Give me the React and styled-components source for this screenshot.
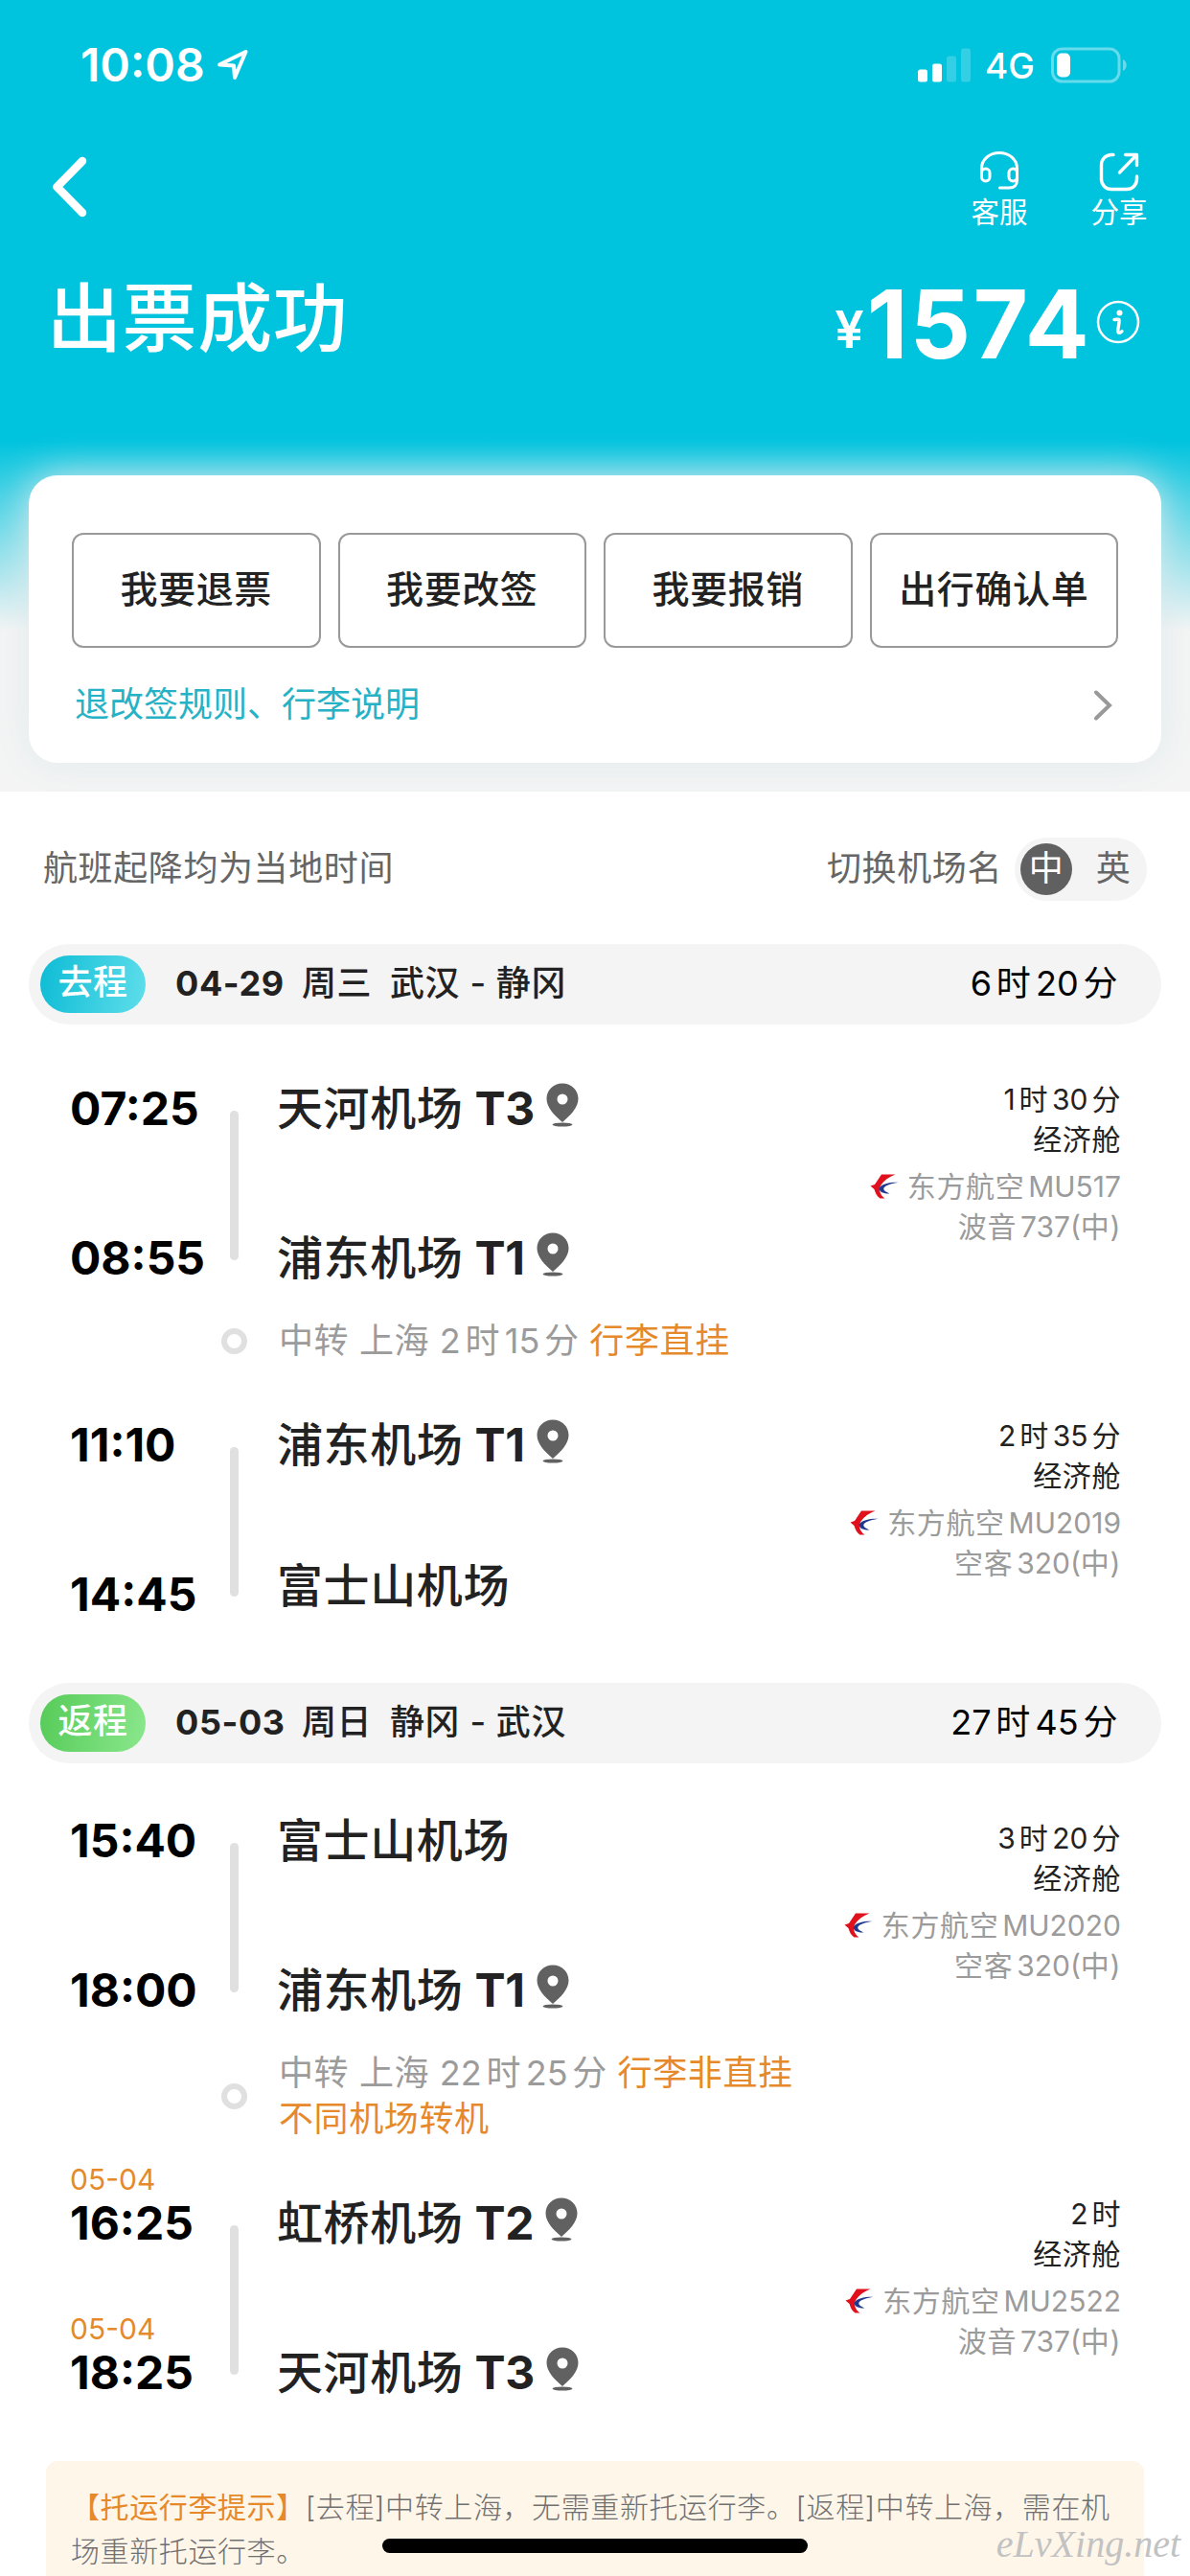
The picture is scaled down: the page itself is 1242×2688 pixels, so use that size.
import React from 'react'
import styled, { createGlobalStyle } from 'styled-components'

const cyan = '#00c3de'
const ink = '#222222'
const darkGrey = '#666666'
const midGrey = '#9b9b9b'
const lightGrey = '#e0e0e0'
const panelGrey = '#f4f4f4'
const orange = '#e6892a'

const GlobalStyle = createGlobalStyle`
    * {
        box-sizing: border-box;
    }

    body {
        margin: 0;
        background: #ffffff;
        font-family: Inter, 'Noto Sans CJK SC', sans-serif;
        line-height: 1.2;
        color: ${ink};
    }
`

const Icon = styled.svg`
    display: block;
    flex-shrink: 0;
    margin-top: ${({ $shift }) => $shift || 0}px;
`

const Screen = styled.div`
    position: relative;
    width: 1242px;
    height: 2688px;
    overflow: hidden;
    white-space: nowrap;
`

const Hero = styled.header`
    height: 826px;
    overflow: hidden;
    color: #ffffff;
    background: linear-gradient(${cyan} 0, ${cyan} 460px, ${panelGrey} 658px);
`

const StatusBar = styled.div`
    height: 136px;
    padding: 0 65px 0 84px;
    display: flex;
    align-items: center;
    justify-content: space-between;
`

const StatusGroup = styled.div`
    display: flex;
    align-items: center;
`

const Clock = styled.span`
    margin-right: 12px;
    font-size: 48px;
    font-weight: 600;
    line-height: 48px;
`

const Network = styled.span`
    margin: 2px 17px 0 14px;
    font-size: 37px;
    font-weight: 500;
    line-height: 40px;
`

const Nav = styled.nav`
    height: 112px;
    padding: 22px 44px 0 53px;
    display: flex;
    justify-content: space-between;
    align-items: flex-start;
`

const NavActions = styled.div`
    display: flex;
    gap: 65px;
`

const NavAction = styled.div`
    width: 60px;
    display: flex;
    flex-direction: column;
    align-items: center;
    font-size: 29.5px;
    line-height: 42px;
`

const TitleRow = styled.div`
    height: 166px;
    padding: 0 52px 0 49px;
    display: flex;
    align-items: center;
    justify-content: space-between;
`

const Title = styled.h1`
    margin: 3px 0 0;
    font-size: 78px;
    font-weight: 500;
    line-height: 80px;
    letter-spacing: 0.6px;
`

const Price = styled.div`
    display: flex;
    align-items: center;
    padding-top: 14px;
`

const Currency = styled.span`
    margin: 12px 3px 0 0;
    font-size: 54px;
    font-weight: 600;
    line-height: 60px;
`

const Amount = styled.span`
    margin-right: 5px;
    font-size: 99px;
    font-weight: 700;
    line-height: 100px;
    letter-spacing: 2.4px;
`

const Card = styled.section`
    height: 300px;
    margin: 82px 30px 0;
    padding: 60px 45px 0;
    border-radius: 30px;
    background: #ffffff;
    box-shadow: 0 0 40px #dfeaed;
`

const ActionGrid = styled.div`
    display: grid;
    grid-template-columns: repeat(4, 1fr);
    gap: 18px;
`

const ActionButton = styled.button`
    height: 120px;
    padding: 0 0 2px;
    border: 2px solid #999999;
    border-radius: 12px;
    background: #ffffff;
    color: ${ink};
    font-family: inherit;
    font-size: 39px;
    font-weight: 500;
    line-height: 48px;
    letter-spacing: 0.6px;
`

const RuleLink = styled.div`
    height: 120px;
    padding: 0 6px 0 3px;
    display: flex;
    align-items: center;
    justify-content: space-between;
    color: #26b2c6;
    font-size: 36px;
`

const Toolbar = styled.div`
    padding: 48px 45px 45px;
    display: flex;
    align-items: center;
    justify-content: space-between;
    color: ${darkGrey};
    font-size: 36px;
    letter-spacing: 0.6px;
`

const Switcher = styled.div`
    display: flex;
    align-items: center;
`

const Pill = styled.div`
    width: 138px;
    height: 66px;
    margin-left: 13px;
    padding: 0 8px 0 6px;
    display: flex;
    align-items: center;
    justify-content: space-between;
    border-radius: 33px;
    background: ${panelGrey};
`

const PillOption = styled.span`
    width: 54px;
    height: 54px;
    border-radius: 50%;
    line-height: 52px;
    text-align: center;
    color: ${({ $active }) => ($active ? '#ffffff' : darkGrey)};
    background: ${({ $active }) => ($active ? '#606060' : 'transparent')};
`

const TripBar = styled.div`
    height: 84px;
    margin: 0 30px;
    padding: 0 45px 0 12px;
    display: flex;
    align-items: center;
    border-radius: 42px;
    background: ${panelGrey};
    font-size: 36px;
    letter-spacing: 0.6px;
`

const TripTag = styled.span`
    width: 110px;
    height: 60px;
    margin-right: 31px;
    border-radius: 30px;
    color: #ffffff;
    font-weight: 500;
    line-height: 56px;
    text-align: center;
    background: ${({ $back }) => ($back
        ? 'linear-gradient(100deg, #56cb58, #8ae78c)'
        : 'linear-gradient(100deg, #0dbcd5, #5fdeeb)')};
`

const TripDate = styled.span`
    width: 132px;
    font-weight: 700;
    letter-spacing: 0.6px;
`

const TripWeekday = styled.span`
    width: 92px;
    font-weight: 500;
`

const TripRoute = styled.span`
    flex: 1;
    font-weight: 500;
`

const TripTotal = styled.span`
    color: #000000;
`

const Legs = styled.div`
    padding: 57px 0 68px;
`

const LegRow = styled.div`
    height: ${({ $pinned }) => ($pinned ? 211 : 204)}px;
    padding: 0 72px 0 73px;
    display: flex;
`

const Stops = styled.div`
    padding-top: ${({ $pinned }) => ($pinned ? 7 : 0)}px;
    display: flex;
    flex: 1;
`

const StopColumn = styled.div`
    width: ${({ $width }) => $width || 'auto'};
    display: flex;
    flex-direction: column;
    gap: 108px;
`

const StopTime = styled.div`
    height: 48px;
    display: flex;
    flex-direction: column;
    justify-content: flex-end;
    color: #000000;
    font-size: 48px;
    font-weight: 700;
    line-height: 48px;
`

const NextDay = styled.span`
    color: ${orange};
    font-size: 30px;
    font-weight: 400;
    line-height: 44px;
`

const Track = styled.div`
    width: 9px;
    height: 156px;
    margin: 26px 40px 0 9px;
    border-radius: 5px;
    background: ${lightGrey};
`

const Airport = styled.div`
    height: 48px;
    margin-top: ${({ $raised }) => ($raised ? '-9px' : '0')};
    margin-bottom: ${({ $raised }) => ($raised ? '9px' : '0')};
    display: flex;
    align-items: center;
    gap: 12px;
    font-size: 48px;
    font-weight: 500;
    line-height: 48px;
    letter-spacing: 0.6px;

    b {
        margin-left: 1px;
        font-weight: 700;
        letter-spacing: -0.3px;
    }
`

const Detail = styled.div`
    display: flex;
    flex-direction: column;
    align-items: flex-end;
    color: ${({ $muted }) => ($muted ? midGrey : ink)};
    font-size: 30px;
    line-height: 42px;
    letter-spacing: 0.6px;

    & + & {
        margin-top: 7px;
    }
`

const Airline = styled.div`
    display: flex;
    align-items: center;
    gap: 9px;
`

const TransferRow = styled.div`
    padding: 38px 0 54px 231px;
    display: flex;
    align-items: center;
    color: ${midGrey};
    font-size: 36px;
    line-height: 48px;
    letter-spacing: 0.6px;
`

const Ring = styled.i`
    width: 27px;
    height: 27px;
    margin-right: 33px;
    border: 6px solid ${lightGrey};
    border-radius: 50%;
`

const Warning = styled.span`
    color: ${orange};
`

// keeps a thin gap between digits and the characters beside them
const Latin = styled.span`
    margin: 0 ${({ $last }) => ($last ? '0' : '0.13em')} 0 ${({ $first }) => ($first ? '0' : '0.13em')};
    letter-spacing: 0;
`

const Notice = styled.section`
    height: 140px;
    margin: 0 48px;
    padding: 25px 26px 0;
    border-radius: 12px;
    background: #fff6ea;
    color: #707070;
    font-size: 30px;
    font-weight: 300;
    line-height: 46px;
    letter-spacing: 0.6px;

    strong {
        color: ${orange};
        font-weight: 400;
    }
`

const HomeIndicator = styled.div`
    position: absolute;
    left: 399px;
    bottom: 24px;
    width: 444px;
    height: 15px;
    border-radius: 8px;
    background: #000000;
`

const Watermark = styled.span`
    position: absolute;
    right: 10px;
    bottom: 9px;
    color: #c2c2c2;
    font-family: 'Liberation Serif', serif;
    font-size: 40px;
    font-style: italic;
    line-height: 48px;
`

const LocationIcon = () => (
    <Icon $shift={-2} width="34" height="34" viewBox="0 0 34 34" fill="none" stroke="#fff" strokeWidth="4" strokeLinejoin="round">
        <path d="M3 17.500L30.500 4L19 31L18 18.500Z" />
    </Icon>
)

const SignalIcon = () => (
    <Icon width="56" height="36" viewBox="0 0 56 36" fill="#fff">
        <rect x="0" y="22.500" width="10" height="13" rx="2.500" />
        <rect x="15" y="16.500" width="10" height="19" rx="2.500" />
        <rect x="30" y="8.500" width="10" height="27" rx="2.500" opacity="0.2" />
        <rect x="45" y="0.500" width="10" height="35" rx="2.500" opacity="0.2" />
    </Icon>
)

const BatteryIcon = () => (
    <Icon width="80" height="38" viewBox="0 0 80 38" fill="#fff">
        <rect x="1.500" y="2" width="69.500" height="34" rx="10" fill="none" stroke="#fff" strokeWidth="3" opacity="0.4" />
        <rect x="6" y="6.500" width="14" height="25" rx="5" />
        <path d="M75 13c5 2 5 10 0 12z" opacity="0.4" />
    </Icon>
)

const BackIcon = () => (
    <Icon $shift={4} width="40" height="66" viewBox="0 0 40 66" fill="none" stroke="#fff" strokeWidth="8.500" strokeLinecap="round" strokeLinejoin="round">
        <path d="M33 6L6.500 33L33 60" />
    </Icon>
)

const HeadsetIcon = () => (
    <Icon width="42" height="42" viewBox="0 0 42 42" fill="none" stroke="#fff" strokeWidth="3" strokeLinecap="round">
        <path d="M2.500 21v-3C2.500 8 11 1.500 21 1.500S39.500 8 39.500 18v12c0 5-3 8-8 8h-10" />
        <rect x="2.500" y="18" width="8.500" height="13" rx="4.250" />
        <rect x="31" y="18" width="8.500" height="13" rx="4.250" />
    </Icon>
)

const ShareIcon = () => (
    <Icon width="42" height="42" viewBox="0 0 42 42" fill="none" stroke="#fff" strokeWidth="3.400" strokeLinecap="round" strokeLinejoin="round">
        <path d="M15 3.500h-2A10.500 10.500 0 0 0 2.500 14v15a10.500 10.500 0 0 0 10.500 10.500h16a10.500 10.500 0 0 0 10.500-10.500v-3" />
        <path d="M27.500 3.500h12v11M38.500 4.500L21.500 22" />
    </Icon>
)

const InfoIcon = () => (
    <Icon $shift={-5} width="46" height="46" viewBox="0 0 46 46">
        <circle cx="23" cy="23" r="21" fill="none" stroke="#fff" strokeWidth="2.500" />
        <circle cx="24.500" cy="13.500" r="3" fill="#fff" />
        <path d="M19 20.500c2.500 0 4-1 5 0s-2 11.500-1 13 2.500.5 4-.8" fill="none" stroke="#fff" strokeWidth="3.400" strokeLinecap="round" />
    </Icon>
)

const ArrowIcon = () => (
    <Icon width="20" height="34" viewBox="0 0 20 34" fill="none" stroke="#999" strokeWidth="4" strokeLinecap="round">
        <path d="M3 3.500L17 17L3 30.500" />
    </Icon>
)

const PinIcon = () => (
    <Icon $shift={-8} width="34" height="46" viewBox="0 0 34 46" fill="#616161">
        <path fillRule="evenodd" d="M17 0.500C7.500 0.500 0.500 7.500 0.500 16.500C0.500 26 9 34 17 41C25 34 33.500 26 33.500 16.500C33.500 7.500 26.500 0.500 17 0.500ZM17 11.500a5.500 5.500 0 1 1 0 11a5.500 5.500 0 1 1 0-11Z" />
        <ellipse cx="17" cy="43.500" rx="10.500" ry="2" />
    </Icon>
)

const EasternLogo = () => (
    <Icon width="30" height="26" viewBox="0 0 30 26">
        <path d="M12 0.500H26.500C19.500 3 14.500 7 11.500 11.500C8.800 16 10 21.500 15.500 25.500H10.500C7 23 5.500 19.500 4.500 16L0.500 12.500L5 11Z" fill="#e0101c" />
        <path d="M29.500 8.800C21 8.500 12 10.500 9.800 14.500C9.200 18.500 13.500 20.800 20.500 20.500C16.500 18.500 13.500 17 14.500 14.500C16.500 11.500 23 10 29.500 8.800Z" fill="#20398f" />
    </Icon>
)

const Spaced = ({ text }) => {
    const runs = text.match(/[\x21-\x7e]+|[^\x21-\x7e]+/g)
    return runs.map((run, i) => (
        /^[0-9A-Z]/.test(run)
            ? <Latin key={i} $first={i === 0} $last={i === runs.length - 1 || run.endsWith('(')}>{run}</Latin>
            : run
    ))
}

const Place = ({ stop, raised }) => (
    <Airport $raised={raised && !stop.terminal}>
        <span>{stop.name}{stop.terminal && <b> {stop.terminal}</b>}</span>
        {stop.terminal && <PinIcon />}
    </Airport>
)

const Leg = ({ leg }) => {
    const pinned = Boolean(leg.from.terminal)
    return (
        <LegRow $pinned={pinned}>
            <Stops $pinned={pinned}>
                <StopColumn $width="158px">
                    {[leg.from, leg.to].map((stop) => (
                        <StopTime key={stop.time}>
                            {stop.day && <NextDay>{stop.day}</NextDay>}
                            {stop.time}
                        </StopTime>
                    ))}
                </StopColumn>
                <Track />
                <StopColumn>
                    <Place stop={leg.from} />
                    <Place stop={leg.to} raised />
                </StopColumn>
            </Stops>
            <div>
                <Detail>
                    <span><Spaced text={leg.duration} /></span>
                    <span>经济舱</span>
                </Detail>
                <Detail $muted>
                    <Airline>
                        <EasternLogo />
                        <span><Spaced text={`东方航空${leg.flight}`} /></span>
                    </Airline>
                    <span><Spaced text={leg.plane} /></span>
                </Detail>
            </div>
        </LegRow>
    )
}

const Transfer = ({ wait, warning, extra }) => (
    <TransferRow>
        <Ring />
        <div>
            中转 上海 <Spaced text={wait} /> <Warning>{warning}</Warning>
            {extra && <><br /><Warning>{extra}</Warning></>}
        </div>
    </TransferRow>
)

const trips = [
    {
        tag: '去程',
        date: '04-29',
        weekday: '周三',
        route: '武汉 - 静冈',
        total: '6时20分',
        legs: [
            {
                from: { time: '07:25', name: '天河机场', terminal: 'T3' },
                to: { time: '08:55', name: '浦东机场', terminal: 'T1' },
                duration: '1时30分',
                flight: 'MU517',
                plane: '波音737(中)'
            },
            {
                from: { time: '11:10', name: '浦东机场', terminal: 'T1' },
                to: { time: '14:45', name: '富士山机场' },
                duration: '2时35分',
                flight: 'MU2019',
                plane: '空客320(中)'
            }
        ],
        transfer: { wait: '2时15分', warning: '行李直挂' }
    },
    {
        tag: '返程',
        back: true,
        date: '05-03',
        weekday: '周日',
        route: '静冈 - 武汉',
        total: '27时45分',
        legs: [
            {
                from: { time: '15:40', name: '富士山机场' },
                to: { time: '18:00', name: '浦东机场', terminal: 'T1' },
                duration: '3时20分',
                flight: 'MU2020',
                plane: '空客320(中)'
            },
            {
                from: { time: '16:25', name: '虹桥机场', terminal: 'T2', day: '05-04' },
                to: { time: '18:25', name: '天河机场', terminal: 'T3', day: '05-04' },
                duration: '2时',
                flight: 'MU2522',
                plane: '波音737(中)'
            }
        ],
        transfer: { wait: '22时25分', warning: '行李非直挂', extra: '不同机场转机' }
    }
]

const Trip = ({ trip }) => (
    <section>
        <TripBar>
            <TripTag $back={trip.back}>{trip.tag}</TripTag>
            <TripDate>{trip.date}</TripDate>
            <TripWeekday>{trip.weekday}</TripWeekday>
            <TripRoute>{trip.route}</TripRoute>
            <TripTotal><Spaced text={trip.total} /></TripTotal>
        </TripBar>
        <Legs>
            <Leg leg={trip.legs[0]} />
            <Transfer {...trip.transfer} />
            <Leg leg={trip.legs[1]} />
        </Legs>
    </section>
)

export default function App() {
    return (
        <Screen>
            <GlobalStyle />
            <Hero>
                <StatusBar>
                    <StatusGroup>
                        <Clock>10:08</Clock>
                        <LocationIcon />
                    </StatusGroup>
                    <StatusGroup>
                        <SignalIcon />
                        <Network>4G</Network>
                        <BatteryIcon />
                    </StatusGroup>
                </StatusBar>
                <Nav>
                    <BackIcon />
                    <NavActions>
                        <NavAction><HeadsetIcon />客服</NavAction>
                        <NavAction><ShareIcon />分享</NavAction>
                    </NavActions>
                </Nav>
                <TitleRow>
                    <Title>出票成功</Title>
                    <Price>
                        <Currency>¥</Currency>
                        <Amount>1574</Amount>
                        <InfoIcon />
                    </Price>
                </TitleRow>
                <Card>
                    <ActionGrid>
                        {['我要退票', '我要改签', '我要报销', '出行确认单'].map((label) => (
                            <ActionButton key={label}>{label}</ActionButton>
                        ))}
                    </ActionGrid>
                    <RuleLink>
                        退改签规则、行李说明
                        <ArrowIcon />
                    </RuleLink>
                </Card>
            </Hero>
            <Toolbar>
                <span>航班起降均为当地时间</span>
                <Switcher>
                    切换机场名
                    <Pill>
                        <PillOption $active>中</PillOption>
                        <PillOption>英</PillOption>
                    </Pill>
                </Switcher>
            </Toolbar>
            {trips.map((trip) => (
                <Trip key={trip.tag} trip={trip} />
            ))}
            <Notice>
                <strong>【托运行李提示】</strong>[去程]中转上海，无需重新托运行李。[返程]中转上海，需在机
                <br />
                场重新托运行李。
            </Notice>
            <HomeIndicator />
            <Watermark>eLvXing.net</Watermark>
        </Screen>
    )
}
